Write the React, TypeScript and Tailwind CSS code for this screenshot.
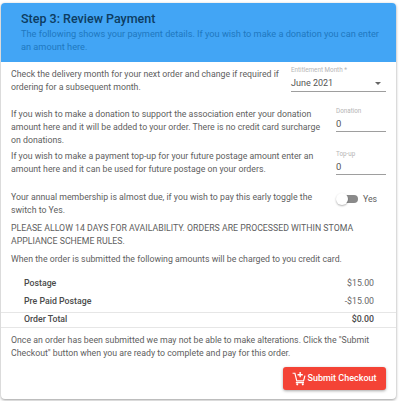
function SubmitIcon() {
  return (
    <svg width="14" height="15" viewBox="0 0 24 24" fill="none" stroke="white" strokeWidth="2" className="shrink-0">
      <path d="M1 3h4l3.2 13h11.6l2.4-9" />
      <path d="M6.5 19.2h14" />
      <circle cx="9" cy="22" r="1.8" fill="white" stroke="none" />
      <circle cx="18.5" cy="22" r="1.8" fill="white" stroke="none" />
      <path d="M14 1v9M9.5 5.5h9" strokeWidth="2.4" />
    </svg>
  );
}

function Field({ label, value }: { label: string; value: string }) {
  return (
    <div className="h-[25px] w-[50px] shrink-0 border-b border-[#9e9e9e]">
      <div className="text-[6.3px] leading-[9px] text-[#b5b5b5]">{label}</div>
      <div className="mt-px text-[9.5px] leading-[13px] text-[#555]">{value}</div>
    </div>
  );
}

function TotalRow({ label, value, bold, compact }: { label: string; value: string; bold?: boolean; compact?: boolean }) {
  return (
    <div
      className={
        compact
          ? "flex h-[14px] items-center justify-between pl-[23px] pr-[22px] text-[8.75px]"
          : "flex h-[17.5px] items-center justify-between pl-[23px] pr-[22px] text-[8.75px]"
      }
    >
      <span className="font-medium text-[#4a4a4a]">{label}</span>
      <span className={bold ? "font-medium text-[#4a4a4a]" : "text-[#666]"}>{value}</span>
    </div>
  );
}

export default function App() {
  return (
    <div className="h-[401px] w-[400px] bg-white pl-px pr-[4px] pt-[3px] font-['Roboto',sans-serif]">
      <div className="h-[396px] overflow-hidden rounded-[4px] bg-white shadow-[0_1px_3px_rgba(0,0,0,0.4)]">
        <div className="h-[59px] bg-[#42a5f5] pl-[20px] pr-[16px] pt-[8px]">
          <h2 className="text-[12.5px] font-medium leading-[16px] text-[#0d3c61]">Step 3: Review Payment</h2>
          <p className="text-[9.2px] leading-[13px] text-[#1f78c0]">
            The following shows your payment details. If you wish to make a donation you can enter an amount here.
          </p>
        </div>

        <div className="px-[10px] text-[8.75px] leading-[13px] text-[#606060]">
          <div className="flex justify-between pt-[4px]">
            <p className="w-[275px] pt-[2px]">
              Check the delivery month for your next order and change if required if ordering for a subsequent month.
            </p>
            <div className="h-[26px] w-[95px] border-b border-[#9e9e9e]">
              <div className="text-[6.3px] leading-[9px] text-[#b5b5b5]">Entitlement Month *</div>
              <div className="flex h-[16px] items-center justify-between pr-[5px] text-[9px] text-[#555]">
                <span>June 2021</span>
                <span className="h-0 w-0 border-x-[3px] border-t-[3px] border-x-transparent border-t-[#666]" />
              </div>
            </div>
          </div>

          <div className="mt-[13px] flex justify-between">
            <p className="w-[312px] pt-px">
              If you wish to make a donation to support the association enter your donation amount here and it will be
              added to your order. There is no credit card surcharge on donations.
            </p>
            <Field label="Donation" value="0" />
          </div>

          <div className="mt-[3px] flex justify-between">
            <p className="w-[312px]">
              If you wish to make a payment top-up for your future postage amount enter an amount here and it can be
              used for future postage on your orders.
            </p>
            <Field label="Top-up" value="0" />
          </div>

          <div className="mt-[15px] flex justify-between">
            <p className="w-[312px]">
              Your annual membership is almost due, if you wish to pay this early toggle the switch to Yes.
            </p>
            <div className="flex h-[16px] w-[50px] shrink-0 items-center gap-[5px]">
              <div className="relative ml-[2px] h-[8px] w-[20px] rounded-full bg-[#8a8a8a]">
                <span className="absolute left-[-2px] top-[-2px] h-[12px] w-[12px] rounded-full bg-white shadow-[0_1px_2px_rgba(0,0,0,0.3)]" />
              </div>
              <span>Yes</span>
            </div>
          </div>

          <p className="mt-[5px]">
            PLEASE ALLOW 14 DAYS FOR AVAILABILITY. ORDERS ARE PROCESSED WITHIN STOMA APPLIANCE SCHEME RULES.
          </p>
          <p className="mt-[5px]">
            When the order is submitted the following amounts will be charged to you credit card.
          </p>
        </div>

        <div className="mt-[9px]">
          <TotalRow label="Postage" value="$15.00" />
          <TotalRow label="Pre Paid Postage" value="-$15.00" />
          <div className="mt-[2px] border-y border-[#e6e6e6]">
            <TotalRow label="Order Total" value="$0.00" bold compact />
          </div>
        </div>

        <p className="mt-[6px] px-[10px] text-[8.75px] leading-[13px] text-[#606060]">
          Once an order has been submitted we may not be able to make alterations. Click the "Submit Checkout" button
          when you are ready to complete and pay for this order.
        </p>

        <div className="mt-[7px] flex justify-end pr-[10px]">
          <button className="flex h-[23px] w-[103px] items-center justify-center gap-[1px] rounded-[3px] bg-[#f44336] text-[9px] font-medium text-white shadow-[0_1px_3px_rgba(0,0,0,0.35)]">
            <SubmitIcon />
            Submit Checkout
          </button>
        </div>
      </div>
    </div>
  );
}
